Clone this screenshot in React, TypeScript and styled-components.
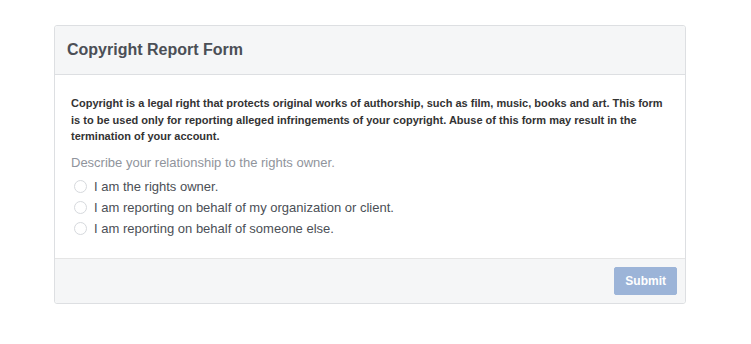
import React from 'react';
import styled, { createGlobalStyle } from 'styled-components';

const GlobalStyle = createGlobalStyle`
  html, body {
    margin: 0;
    padding: 0;
    background: #ffffff;
    font-family: Arial, "Liberation Sans", Helvetica, sans-serif;
  }
`;

const Page = styled.div`
  padding: 25px 0 0 54px;
`;

const Card = styled.div`
  width: 632px;
  box-sizing: border-box;
  border: 1px solid #dddfe2;
  border-radius: 3px;
  background: #ffffff;
  display: flex;
  flex-direction: column;
`;

const Header = styled.div`
  height: 48px;
  display: flex;
  align-items: center;
  padding: 0 12px;
  background: #f5f6f7;
  border-bottom: 1px solid #dddfe2;
  border-radius: 3px 3px 0 0;
`;

const Title = styled.h2`
  margin: 0;
  font-size: 16px;
  font-weight: bold;
  color: #4b4f56;
`;

const Body = styled.div`
  padding: 20px 16px 19px 16px;
  display: flex;
  flex-direction: column;
`;

const Notice = styled.p`
  margin: 0;
  font-size: 11px;
  line-height: 16.5px;
  font-weight: bold;
  color: #333333;
`;

const Question = styled.div`
  margin-top: 10px;
  font-size: 13px;
  line-height: 16px;
  color: #90949c;
`;

const Options = styled.div`
  display: flex;
  flex-direction: column;
  margin-top: 5px;
  padding-left: 3px;
`;

const Option = styled.label`
  display: flex;
  align-items: center;
  gap: 7px;
  height: 21px;
  font-size: 13px;
  color: #4b4f56;
  cursor: pointer;
`;

const Radio = styled.span`
  width: 13px;
  height: 13px;
  box-sizing: border-box;
  border-radius: 50%;
  border: 1px solid #d6d9dd;
  background: #ffffff;
  flex-shrink: 0;
`;

const Footer = styled.div`
  height: 44px;
  display: flex;
  align-items: center;
  justify-content: flex-end;
  padding: 0 8px;
  background: #f5f6f7;
  border-top: 1px solid #e5e5e5;
  border-radius: 0 0 3px 3px;
`;

const SubmitButton = styled.button`
  height: 28px;
  padding: 0 10px;
  border: 1px solid #9cb4d8;
  border-radius: 2px;
  background: #9cb4d8;
  color: #ffffff;
  font-family: inherit;
  font-size: 12px;
  font-weight: bold;
  cursor: default;
`;

const options = [
  'I am the rights owner.',
  'I am reporting on behalf of my organization or client.',
  'I am reporting on behalf of someone else.',
];

export default function App() {
  return (
    <>
      <GlobalStyle />
      <Page>
        <Card>
          <Header>
            <Title>Copyright Report Form</Title>
          </Header>
          <Body>
            <Notice>
              Copyright is a legal right that protects original works of authorship, such as film, music, books and art. This form
              is to be used only for reporting alleged infringements of your copyright. Abuse of this form may result in the
              termination of your account.
            </Notice>
            <Question>Describe your relationship to the rights owner.</Question>
            <Options>
              {options.map(o => (
                <Option key={o}>
                  <Radio />
                  {o}
                </Option>
              ))}
            </Options>
          </Body>
          <Footer>
            <SubmitButton disabled>Submit</SubmitButton>
          </Footer>
        </Card>
      </Page>
    </>
  );
}
